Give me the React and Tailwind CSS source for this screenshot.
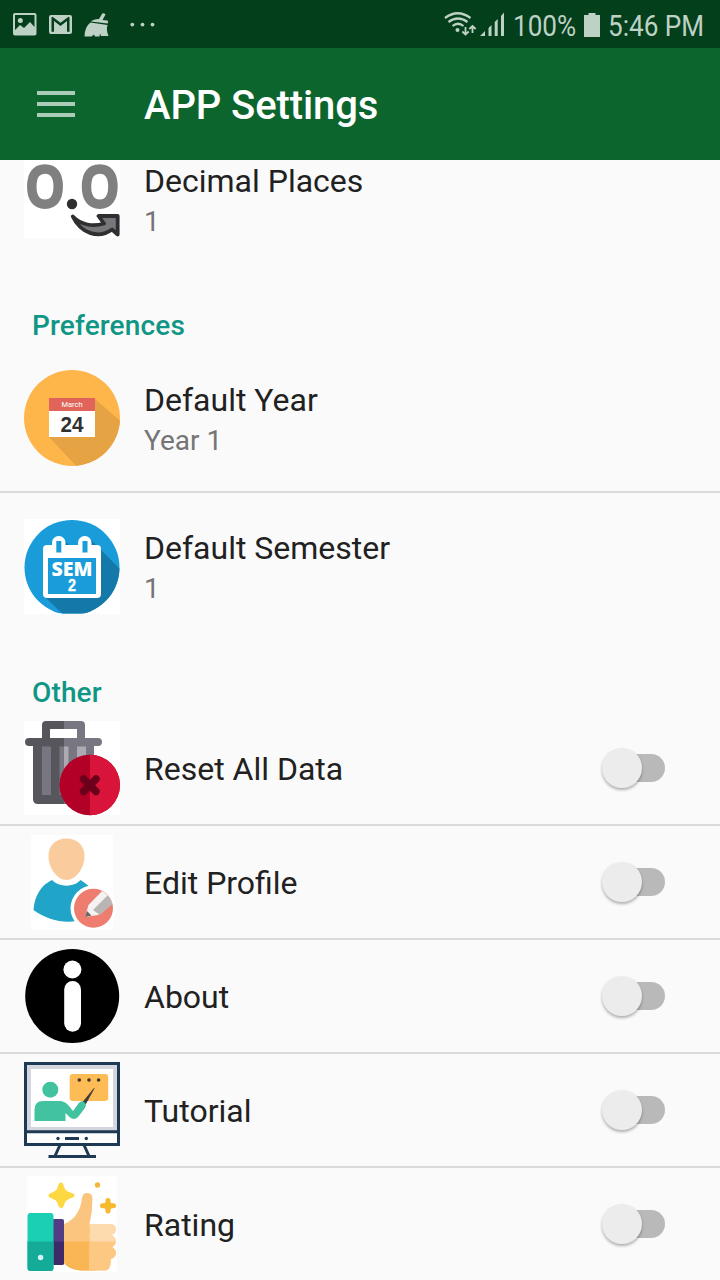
import React from "react";

function DecimalIcon() {
  return (
    <svg className="h-[78px] w-24 shrink-0" viewBox="0 0 96 78">
      <rect width="96" height="78" fill="#fff" />
      <g fill="none" stroke="#808080" strokeWidth="9.5">
        <path d="M21 8.9C29.6 8.9 34.2 15 34.2 26.5S29.6 44.200 21 44.200 7.800 38 7.800 26.500 12.400 8.900 21 8.900Z" />
        <path d="M75.700 8.900C84.300 8.900 88.900 15 88.900 26.500S84.300 44.200 75.700 44.200 62.500 38 62.500 26.500 67.100 8.900 75.700 8.900Z" />
      </g>
      <circle cx="48" cy="44" r="5.200" fill="#2f2f31" />
      <path d="M48.800 56.500C57 65 69 67 80 63.500L74.500 56H93.700V74.500L88 69.500C75 79 57 74 48.800 56.500Z" fill="#77777a" stroke="#2f2f31" strokeWidth="3.800" strokeLinejoin="round" />
    </svg>
  );
}

function YearIcon() {
  return (
    <svg className="size-24 shrink-0" viewBox="0 0 96 96">
      <defs>
        <clipPath id="yearDisc"><circle cx="48" cy="48" r="48" /></clipPath>
      </defs>
      <circle cx="48" cy="48" r="48" fill="#feb54a" />
      <path d="M71 29L102 56V100H56L25 67Z" fill="#e5a343" clipPath="url(#yearDisc)" />
      <rect x="25" y="28" width="46" height="13" fill="#e0645a" />
      <rect x="25" y="41" width="46" height="26" fill="#fff" />
      <text x="48" y="37" textAnchor="middle" fontFamily="Roboto, sans-serif" fontSize="7.500" fill="#fff" textLength="21" lengthAdjust="spacingAndGlyphs">March</text>
      <text x="48" y="62" textAnchor="middle" fontFamily="Liberation Sans, sans-serif" fontWeight="700" fontSize="22" fill="#303030" textLength="23" lengthAdjust="spacingAndGlyphs">24</text>
    </svg>
  );
}

function SemesterIcon() {
  return (
    <svg className="size-24 shrink-0" viewBox="0 0 96 96">
      <defs>
        <clipPath id="semDisc"><path d="M0 0H96V94.500H0Z" /></clipPath>
        <clipPath id="semCircle"><circle cx="48" cy="48.500" r="47.500" /></clipPath>
      </defs>
      <rect width="96" height="95" fill="#fff" />
      <g clipPath="url(#semDisc)">
        <circle cx="48" cy="48.500" r="47.500" fill="#199cd9" />
        <path d="M38 19L52 33H58L66 20L104 58V104H48L20 77Z" fill="#1479a8" clipPath="url(#semCircle)" />
      </g>
      <path d="M23 26H73Q77 26 77 30V75Q77 79 73 79H23Q19 79 19 75V30Q19 26 23 26Z" fill="#fff" />
      <rect x="28" y="17" width="13.500" height="20" rx="6.500" fill="#fff" />
      <rect x="54" y="17" width="13.500" height="20" rx="6.500" fill="#fff" />
      <rect x="32.300" y="22" width="5" height="11.500" fill="#199cd9" />
      <rect x="58.500" y="22" width="5" height="11.500" fill="#199cd9" />
      <rect x="24" y="39" width="48" height="36" fill="#199cd9" />
      <text x="48" y="57" textAnchor="middle" fontFamily="Open Sans, sans-serif" fontWeight="800" fontSize="19" fill="#fff" textLength="41" lengthAdjust="spacingAndGlyphs">SEM</text>
      <text x="48" y="72" textAnchor="middle" fontFamily="Liberation Sans, sans-serif" fontWeight="700" fontSize="17" fill="#fff" stroke="#fff" strokeWidth="0.400" textLength="8" lengthAdjust="spacingAndGlyphs">2</text>
    </svg>
  );
}

function TrashIcon() {
  return (
    <svg className="size-24 shrink-0" viewBox="0 0 96 96">
      <defs>
        <clipPath id="binLeft"><rect width="40" height="96" /></clipPath>
        <clipPath id="binRight"><rect x="40" width="56" height="96" /></clipPath>
        <clipPath id="discRight"><rect x="66" y="30" width="30" height="66" /></clipPath>
        <path id="bin" d="M18 18V5Q18 1 22 1H57Q61 1 61 5V18H74Q78 18 78 22T74 26H70V79Q70 84 66 84H14Q9 84 9 79V26H5Q1 26 1 22T5 18ZM26 9V18H53V9Z" fillRule="evenodd" />
      </defs>
      <rect y="1" width="96" height="94" fill="#fff" />
      <use href="#bin" fill="#57565c" clipPath="url(#binLeft)" />
      <use href="#bin" fill="#787680" clipPath="url(#binRight)" />
      <path d="M18 26.500H27V75H18ZM35.500 26.500H40V75H35.500Z" fill="#787680" />
      <path d="M40 26.500H44.500V75H40ZM53 26.500H62V75H53Z" fill="#acabb1" />
      <circle cx="65.700" cy="65" r="30.300" fill="#b30027" />
      <circle cx="65.700" cy="65" r="30.300" fill="#d8143a" clipPath="url(#discRight)" />
      <path d="M59.500 59L72 71.500M72 59L59.500 71.500" stroke="#6c001b" strokeWidth="7.500" strokeLinecap="round" />
    </svg>
  );
}

function ProfileIcon() {
  return (
    <svg className="size-24 shrink-0" viewBox="0 0 96 96">
      <defs>
        <clipPath id="penDisc"><circle cx="69.500" cy="74.300" r="19.300" /></clipPath>
      </defs>
      <rect x="7" y="1" width="82" height="95" fill="#fff" />
      <path d="M42.500 4.500C53 4.500 60.500 11 60.500 22C60.500 34 52 46 42.500 46S24.500 34 24.500 22C24.500 11 32 4.500 42.500 4.500Z" fill="#facb9c" />
      <path d="M28 46C35 53.500 50 53.500 56.500 46C68 53 75 63 75 76C58 92 30 91 9.500 76C10.500 62 17 51 28 46Z" fill="#20a4c8" />
      <circle cx="69.500" cy="74.300" r="23" fill="#fff" />
      <circle cx="69.500" cy="74.300" r="19.500" fill="#ee7d70" />
      <g clipPath="url(#penDisc)">
        <path d="M61 83L64.500 71L82 53L94 65L74 81Z" fill="#f4f3f2" />
        <path d="M69 76L87 58L94 65L76 81Z" fill="#b8b5b4" />
        <path d="M61 83L63 77L67.500 81.500Z" fill="#6b6765" />
      </g>
    </svg>
  );
}

function AboutIcon() {
  return (
    <svg className="size-24 shrink-0" viewBox="0 0 96 96">
      <circle cx="48.200" cy="48" r="47" fill="#000" />
      <circle cx="48.400" cy="21.500" r="9" fill="#fff" />
      <rect x="40.200" y="33" width="16.800" height="50.700" rx="8.400" fill="#fff" />
    </svg>
  );
}

function TutorialIcon() {
  return (
    <svg className="size-24 shrink-0" viewBox="0 0 96 96">
      <path d="M36 83L31 94M60 83L65 94" stroke="#1d3953" strokeWidth="3" />
      <path d="M24.500 94.500H72" stroke="#1d3953" strokeWidth="3" />
      <rect x="1.500" y="1.500" width="93" height="81" fill="#fff" stroke="#1d3953" strokeWidth="3" />
      <rect x="5" y="5" width="86" height="62" fill="#fff" stroke="#d3d6de" strokeWidth="4" />
      <path d="M0 69.700H96" stroke="#1d3953" strokeWidth="3" />
      <path d="M41 76.500H55" stroke="#1d3953" strokeWidth="3" />
      <circle cx="34" cy="76.500" r="1.700" fill="#1d3953" />
      <circle cx="62.300" cy="76.500" r="1.700" fill="#1d3953" />
      <circle cx="26.300" cy="27.700" r="8" fill="#42c29f" />
      <path d="M10.500 59V48Q10.500 39 19 39H35Q41 39 45 44L49 49L55 41Q58 38.500 60.500 40.500Q63 43 60 47L54 55Q50 59 45.500 55L41.500 51V59Z" fill="#42c29f" />
      <rect x="45.700" y="12" width="38.500" height="27" rx="3" fill="#fdbc55" />
      <path d="M59 40L70 26.500L61.500 42Z" fill="#3b3937" stroke="#3b3937" strokeWidth="0.800" />
      <path d="M55 41Q58 38.500 60.500 40.500Q63 43 60 47L56 52L51 47Z" fill="#42c29f" />
      <g fill="#3f352c">
        <circle cx="55.300" cy="18" r="1.800" />
        <circle cx="65" cy="18" r="1.800" />
        <circle cx="74.600" cy="18" r="1.800" />
      </g>
    </svg>
  );
}

function RatingIcon() {
  return (
    <svg className="size-24 shrink-0" viewBox="0 0 96 96">
      <defs>
        <clipPath id="lowerHand"><rect y="65.500" width="96" height="31" /></clipPath>
      </defs>
      <rect x="3" y="0" width="90" height="96" fill="#fff" />
      <path d="M37 6.500C39.500 6.500 39.500 10 41 13Q42 15 45 16C49 17.500 50.500 17.500 50.500 19.500S48 21.500 45 23Q42 24 41 26.500C39.500 30 39.500 32 37 32S34.500 29 33 26Q32 24 29 23C26 21.500 24.500 21.500 24.500 19.500S27 17.500 29 16Q32 15 33 13C34.500 9 34.500 6.500 37 6.500Z" fill="#fed843" />
      <circle cx="73.500" cy="9" r="2.700" fill="#f4b63a" />
      <path d="M84 24.500V35M78.500 29.800H89.500" stroke="#f7b92e" strokeWidth="5" strokeLinecap="round" />
      <circle cx="84" cy="29.800" r="4.300" fill="#f7b92e" />
      <path d="M40 48C51 44 57 33 58 22Q58.500 17 63.500 17T68.500 23Q68.500 36 65.500 48H73V94.500H57Q45 93.500 40 87Z" fill="#fcc57f" />
      <path d="M40 48C51 44 57 33 58 22V48H73V94.500H57Q45 93.500 40 87Z" fill="#fab554" clipPath="url(#lowerHand)" />
      <path d="M65.500 48H86Q92 48 92 53Q92 58 88 59Q92 61 92 65T88 71Q92 73 92 77T87 83Q87 94.500 81 94.500H65.500Z" fill="#fddbae" />
      <path d="M65.500 48H86Q92 48 92 53Q92 58 88 59Q92 61 92 65T88 71Q92 73 92 77T87 83Q87 94.500 81 94.500H65.500Z" fill="#fdc982" clipPath="url(#lowerHand)" />
      <path d="M66 59Q64 54 66 50ZM66 71Q63.500 66 66 61ZM66 83Q63.500 78 66 73Z" fill="#fcc57f" />
      <rect x="28" y="43" width="12" height="46" rx="2" fill="#523c85" />
      <path d="M28 65.500H40V87Q40 89 38 89H28Z" fill="#3e2a68" />
      <rect x="3.500" y="37" width="26" height="58" rx="3" fill="#1bcfb4" />
      <path d="M3.500 65.500H29.500V92Q29.500 95 26.500 95H6.500Q3.500 95 3.500 92Z" fill="#14ab98" />
      <circle cx="16.600" cy="81.500" r="2.700" fill="#d4f5f5" />
    </svg>
  );
}

function StatusBar() {
  return (
    <div className="flex h-12 shrink-0 items-center bg-[#033f1b] text-[#bed1c5]">
      <svg className="h-12 w-[160px]" viewBox="0 0 160 48" fill="currentColor">
        <path fillRule="evenodd" d="M15 13H34.500Q36.500 13 36.500 15V33.500Q36.500 35.500 34.500 35.500H15Q13 35.500 13 33.500V15Q13 13 15 13ZM15 15V30L20 25L24 28L30 22L34.500 27V15Z" />
        <circle cx="20.300" cy="20.500" r="2.500" />
        <path fillRule="evenodd" d="M51 15H70Q72 15 72 17V32Q72 34 70 34H51Q49 34 49 32V17Q49 15 51 15ZM51.500 17.500V31.800H54V21L60.500 26L67 21V31.800H69.500V17.500L68.500 16.800L60.500 22.800L52.500 16.800Z" />
        <path d="M99 19L102.300 13.500Q104 12.500 105.500 14.500L102.500 20L107.500 20.500Q109 22 107.500 23.500L91 21.500Q93 19 99 19ZM90.500 22.500L107.500 25Q106 30 108.500 36H101L100 33.500L99.500 36.500H95L94 34.500L91.500 36.500H84.500Q84.500 27 90.500 22.500Z" />
        <circle cx="132.300" cy="24.600" r="1.900" />
        <circle cx="142.500" cy="24.600" r="1.900" />
        <circle cx="152.500" cy="24.600" r="1.900" />
      </svg>
      <svg className="ml-[280px] h-12 w-[74px] shrink-0" viewBox="440 0 74 48" fill="none" stroke="currentColor">
        <g strokeWidth="2.200">
          <path d="M445 18Q457.500 8.500 470.500 18" />
          <path d="M448.500 22Q458 15 467.500 22" />
          <path d="M452.500 26Q458 21.500 463.500 26" />
        </g>
        <circle cx="457.500" cy="30" r="2" fill="currentColor" stroke="none" />
        <path d="M465.500 27V34M462.300 31.500L465.500 34.500L468.700 31.500M472.500 33V26M469.300 29L472.500 26L475.700 29" strokeWidth="1.800" />
        <path d="M480 36L485 31V36ZM488.500 36V28L491.500 25V36ZM494.700 36V22L497.700 19V36ZM501 36V16L504 12.500V36Z" fill="currentColor" stroke="none" />
      </svg>
      <span className="w-[70px] shrink-0 origin-left -ml-px mr-px scale-x-[0.87] pt-1 text-[30px] leading-none whitespace-nowrap">100%</span>
      <svg className="h-12 w-4 shrink-0" viewBox="0 0 16 48" fill="currentColor">
        <path d="M4.500 13H11.500V15H16V37H0V15H4.500Z" />
      </svg>
      <span className="ml-2 shrink-0 origin-left scale-x-[0.87] pt-1 text-[30px] leading-none whitespace-nowrap">5:46 PM</span>
    </div>
  );
}

function AppBar() {
  return (
    <header className="flex h-28 shrink-0 items-center bg-[#0d652e] pl-[37px]">
      <div className="flex h-[26px] w-[38px] flex-col justify-between">
        <span className="h-1 bg-[#a9cdb6]" />
        <span className="h-1 bg-[#a9cdb6]" />
        <span className="h-1 bg-[#a9cdb6]" />
      </div>
      <h1 className="ml-[69px] pt-[3px] text-[40px] font-medium leading-none tracking-[-0.1px] text-white">APP Settings</h1>
    </header>
  );
}

function Labels({ title, value }) {
  return (
    <div>
      <div className="text-[32px] leading-[38px] text-[#212121]">{title}</div>
      {value && <div className="mt-[3px] text-[28px] leading-[38px] text-[#757575]">{value}</div>}
    </div>
  );
}

function SectionTitle({ children }) {
  return <h2 className="h-[72px] pt-[37px] pl-8 text-[28px] font-medium leading-8 tracking-[0.15px] text-[#0f9685]">{children}</h2>;
}

function Toggle() {
  return (
    <div className="mr-[55px] ml-auto flex h-[42px] w-16 shrink-0 items-center">
      <div className="z-10 -mr-5 ml-px size-10 shrink-0 rounded-full bg-[#ececec] shadow-[0_2px_3px_rgba(0,0,0,0.3)]" />
      <div className="h-7 grow rounded-r-full bg-[#b9b9b9]" />
    </div>
  );
}

function SwitchRow({ icon, title }) {
  return (
    <div className="flex h-[114px] items-center gap-6 border-b-2 border-[#dadada] pl-6">
      {icon}
      <div className="pt-px"><Labels title={title} /></div>
      <Toggle />
    </div>
  );
}

export default function App() {
  return (
    <div className="flex h-[1280px] w-[720px] flex-col overflow-hidden bg-[#fafafa] font-[Roboto,sans-serif]">
      <StatusBar />
      <AppBar />
      <main className="shrink-0">
        <div className="flex h-[113px] gap-6 pl-6">
          <DecimalIcon />
          <div className="pt-[2px]"><Labels title="Decimal Places" value="1" /></div>
        </div>
        <SectionTitle>Preferences</SectionTitle>
        <div className="flex h-[148px] items-center gap-6 border-b-2 border-[#dadada] pl-6">
          <YearIcon />
          <div className="pt-[5px]"><Labels title="Default Year" value="Year 1" /></div>
        </div>
        <div className="flex h-[147px] items-center gap-6 pl-6">
          <SemesterIcon />
          <div className="pt-1"><Labels title="Default Semester" value="1" /></div>
        </div>
        <SectionTitle>Other</SectionTitle>
        <SwitchRow icon={<TrashIcon />} title="Reset All Data" />
        <SwitchRow icon={<ProfileIcon />} title="Edit Profile" />
        <SwitchRow icon={<AboutIcon />} title="About" />
        <SwitchRow icon={<TutorialIcon />} title="Tutorial" />
        <SwitchRow icon={<RatingIcon />} title="Rating" />
      </main>
    </div>
  );
}
